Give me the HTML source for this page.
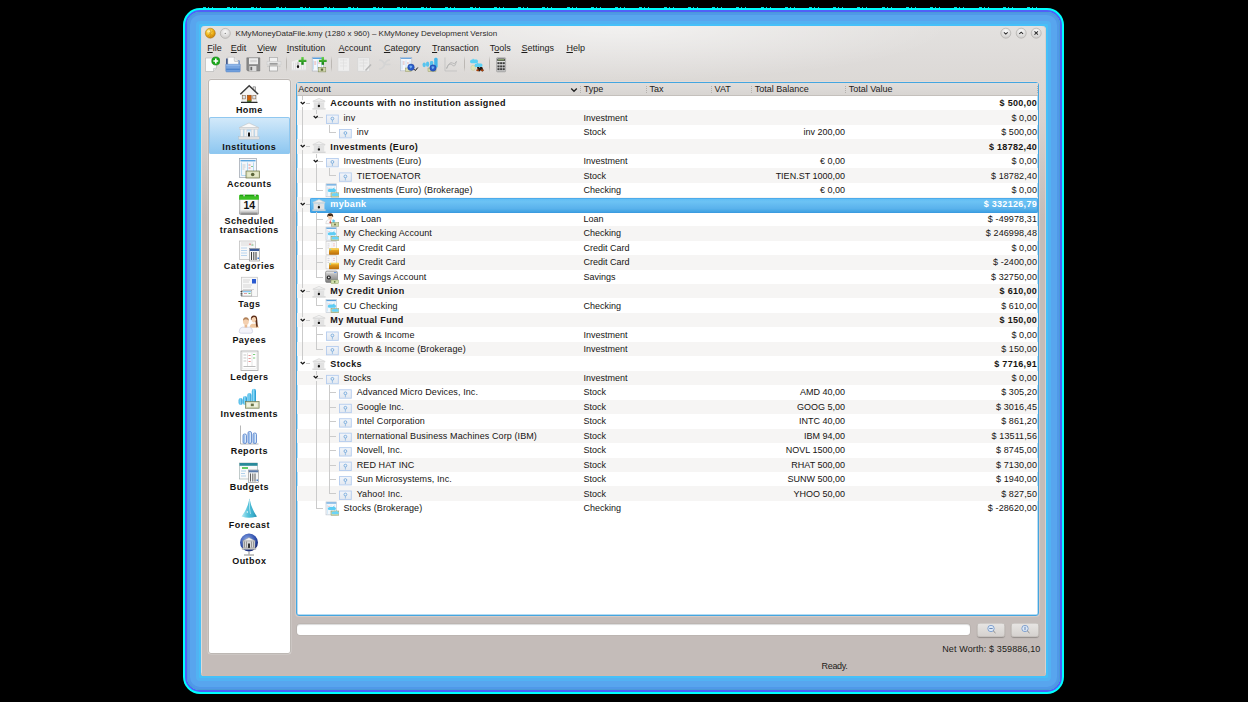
<!DOCTYPE html><html><head><meta charset="utf-8"><style>
html,body{margin:0;padding:0}
body{width:1248px;height:702px;background:#000;position:relative;overflow:hidden;font-family:"Liberation Sans", sans-serif}
.t{position:absolute;white-space:nowrap;line-height:12px}
.b{position:absolute;box-sizing:border-box}
</style></head><body>
<div class="b" style="left:183px;top:7.6px;width:881px;height:686.4px;border-radius:17px;background:#00ffff"></div>
<div class="b" style="left:185px;top:10px;width:877px;height:682px;border-radius:15px;background:#5060f8"></div>
<div class="b" style="left:187px;top:11.6px;width:873px;height:678.6px;border-radius:13px;background:#46c0f8;box-shadow:inset 0 0 0 1px #4a9ad8, inset 0 0 0 3px #5098e8, inset 0 0 0 9px #58a5ee, inset 0 0 0 12px #52b2f2"></div>
<div class="b" style="left:203px;top:7px;width:843px;height:1px;background:repeating-linear-gradient(to right,#00ffff 0 3px,transparent 3px 5px,#00ffff 5px 6px,transparent 6px 9px,#00ffff 9px 10px,transparent 10px 24.24px);opacity:0.85"></div>
<div class="b" style="left:201px;top:26px;width:845px;height:650px;border-radius:4px 4px 3px 3px;background:linear-gradient(to bottom,#e3e1df 0px,#dedbd9 36px,#dcd9d6 54px,#d8d3d0 94px,#cdc7c4 144px,#c4bcb9 192px,#c4bcb9 650px);box-shadow:inset 0 -1.5px 0 #cdbab2, inset 1px 0 0 #dcdad8, inset -1px 0 0 #d8d2ce"></div>
<div class="b" style="left:201px;top:26px;width:845px;height:60px;border-radius:4px 4px 0 0;background:radial-gradient(ellipse 330px 55px at 420px 0px,rgba(255,255,255,0.55),rgba(255,255,255,0) 100%)"></div>
<svg class="b" style="left:204px;top:27px" width="13" height="13" viewBox="0 0 13 13"><defs><radialGradient id="og" cx="0.4" cy="0.35" r="0.7"><stop offset="0" stop-color="#fff080"/><stop offset="0.55" stop-color="#f0b418"/><stop offset="1" stop-color="#c07808"/></radialGradient></defs><circle cx="6.3" cy="6.2" r="5" fill="url(#og)" stroke="#a87018" stroke-width="0.5"/><path d="M6.3 2.5 L6.3 10 M4 4 L8.5 9 M8.5 4 L4 9" stroke="#c07810" stroke-width="0.8" opacity="0.6"/><ellipse cx="4.6" cy="4.4" rx="1.5" ry="1.1" fill="#fff6c0" opacity="0.8"/></svg>
<svg class="b" style="left:219px;top:27px" width="13" height="13" viewBox="0 0 13 13"><defs><radialGradient id="gb" cx="0.5" cy="0.35" r="0.7"><stop offset="0" stop-color="#fafafa"/><stop offset="1" stop-color="#c8c6c4"/></radialGradient></defs><circle cx="6.3" cy="6.4" r="5" fill="url(#gb)" stroke="#a8a6a4" stroke-width="0.6"/><circle cx="6.3" cy="6.4" r="0.7" fill="#888"/></svg>
<div class="t" style="left:235.60px;top:28.32px;font-size:8.03px;font-weight:normal;color:#2c2a28;">KMyMoneyDataFile.kmy (1280 x 960) – KMyMoney Development Version</div>
<svg class="b" style="left:998px;top:26px" width="14" height="14" viewBox="0 0 14 14"><defs><radialGradient id="wb" cx="0.5" cy="0.3" r="0.75"><stop offset="0" stop-color="#fbfbfb"/><stop offset="1" stop-color="#cac8c6"/></radialGradient></defs><circle cx="7.8" cy="7.2" r="5" fill="url(#wb)" stroke="#a9a7a5" stroke-width="0.6"/><g transform="translate(7.8,7)"><path d="M-2.2 -0.8 L0 1.2 L2.2 -0.8" stroke="#2a2a2a" stroke-width="1.2" fill="none" transform="scale(0.85)"/></g></svg>
<svg class="b" style="left:1014px;top:26px" width="14" height="14" viewBox="0 0 14 14"><defs><radialGradient id="wb" cx="0.5" cy="0.3" r="0.75"><stop offset="0" stop-color="#fbfbfb"/><stop offset="1" stop-color="#cac8c6"/></radialGradient></defs><circle cx="7.2" cy="7.2" r="5" fill="url(#wb)" stroke="#a9a7a5" stroke-width="0.6"/><g transform="translate(7.2,7)"><path d="M-2.2 1 L0 -1 L2.2 1" stroke="#2a2a2a" stroke-width="1.2" fill="none" transform="scale(0.85)"/></g></svg>
<svg class="b" style="left:1029px;top:26px" width="14" height="14" viewBox="0 0 14 14"><defs><radialGradient id="wb" cx="0.5" cy="0.3" r="0.75"><stop offset="0" stop-color="#fbfbfb"/><stop offset="1" stop-color="#cac8c6"/></radialGradient></defs><circle cx="7.2" cy="7.2" r="5" fill="url(#wb)" stroke="#a9a7a5" stroke-width="0.6"/><g transform="translate(7.2,7)"><path d="M-2 -2 L2 2 M2 -2 L-2 2" stroke="#2a2a2a" stroke-width="1.2" fill="none" transform="scale(0.85)"/></g></svg>
<div class="t" style="left:207.20px;top:42.18px;font-size:9px;font-weight:normal;color:#1e1c1a;"><u>F</u>ile</div>
<div class="t" style="left:230.80px;top:42.18px;font-size:9px;font-weight:normal;color:#1e1c1a;"><u>E</u>dit</div>
<div class="t" style="left:257.20px;top:42.18px;font-size:9px;font-weight:normal;color:#1e1c1a;"><u>V</u>iew</div>
<div class="t" style="left:286.80px;top:42.18px;font-size:9px;font-weight:normal;color:#1e1c1a;"><u>I</u>nstitution</div>
<div class="t" style="left:338.60px;top:42.18px;font-size:9px;font-weight:normal;color:#1e1c1a;"><u>A</u>ccount</div>
<div class="t" style="left:383.90px;top:42.18px;font-size:9px;font-weight:normal;color:#1e1c1a;"><u>C</u>ategory</div>
<div class="t" style="left:432.00px;top:42.18px;font-size:9px;font-weight:normal;color:#1e1c1a;"><u>T</u>ransaction</div>
<div class="t" style="left:489.70px;top:42.18px;font-size:9px;font-weight:normal;color:#1e1c1a;">T<u>o</u>ols</div>
<div class="t" style="left:521.40px;top:42.18px;font-size:9px;font-weight:normal;color:#1e1c1a;"><u>S</u>ettings</div>
<div class="t" style="left:566.40px;top:42.18px;font-size:9px;font-weight:normal;color:#1e1c1a;"><u>H</u>elp</div>
<div class="b" style="left:208px;top:79px;width:83px;height:575px;border-radius:3px;background:#fff;box-shadow:inset 0 0 0 1px #bdb8b4, 0 0 0 0.5px rgba(255,255,255,0.3)"></div>
<div class="b" style="left:209px;top:117px;width:81px;height:37px;border-radius:2px;background:linear-gradient(to bottom,#d4eafa,#a8d4f4 60%,#8cc6f0);box-shadow:inset 0 0 0 1px #90c8f0"></div>
<div class="t" style="left:49.30px;width:400px;text-align:center;top:103.58px;font-size:9px;font-weight:bold;color:#121110;letter-spacing:0.45px;">Home</div>
<div class="t" style="left:49.30px;width:400px;text-align:center;top:140.68px;font-size:9px;font-weight:bold;color:#121110;letter-spacing:0.45px;">Institutions</div>
<div class="t" style="left:49.30px;width:400px;text-align:center;top:177.58px;font-size:9px;font-weight:bold;color:#121110;letter-spacing:0.45px;">Accounts</div>
<div class="t" style="left:49.30px;width:400px;text-align:center;top:215.08px;font-size:9px;font-weight:bold;color:#121110;letter-spacing:0.45px;">Scheduled</div>
<div class="t" style="left:49.30px;width:400px;text-align:center;top:223.98px;font-size:9px;font-weight:bold;color:#121110;letter-spacing:0.45px;">transactions</div>
<div class="t" style="left:49.30px;width:400px;text-align:center;top:260.18px;font-size:9px;font-weight:bold;color:#121110;letter-spacing:0.45px;">Categories</div>
<div class="t" style="left:49.30px;width:400px;text-align:center;top:297.68px;font-size:9px;font-weight:bold;color:#121110;letter-spacing:0.45px;">Tags</div>
<div class="t" style="left:49.30px;width:400px;text-align:center;top:334.18px;font-size:9px;font-weight:bold;color:#121110;letter-spacing:0.45px;">Payees</div>
<div class="t" style="left:49.30px;width:400px;text-align:center;top:370.98px;font-size:9px;font-weight:bold;color:#121110;letter-spacing:0.45px;">Ledgers</div>
<div class="t" style="left:49.30px;width:400px;text-align:center;top:407.98px;font-size:9px;font-weight:bold;color:#121110;letter-spacing:0.45px;">Investments</div>
<div class="t" style="left:49.30px;width:400px;text-align:center;top:444.58px;font-size:9px;font-weight:bold;color:#121110;letter-spacing:0.45px;">Reports</div>
<div class="t" style="left:49.30px;width:400px;text-align:center;top:481.48px;font-size:9px;font-weight:bold;color:#121110;letter-spacing:0.45px;">Budgets</div>
<div class="t" style="left:49.30px;width:400px;text-align:center;top:518.68px;font-size:9px;font-weight:bold;color:#121110;letter-spacing:0.45px;">Forecast</div>
<div class="t" style="left:49.30px;width:400px;text-align:center;top:555.08px;font-size:9px;font-weight:bold;color:#121110;letter-spacing:0.45px;">Outbox</div>
<div class="b" style="left:296px;top:82px;width:743px;height:534px;border-radius:3px;background:#fff;border:1px solid #44a6e0;box-shadow:inset 0 0 0 0.7px rgba(72,168,224,0.55), 0 0 1px 1px rgba(240,222,216,0.5)"></div>
<div class="b" style="left:297px;top:83px;width:741px;height:13px;background:linear-gradient(to bottom,#e0dddb,#d8d5d2);border-bottom:1px solid #c4c0bc"></div>
<div class="t" style="left:298.30px;top:82.88px;font-size:9px;font-weight:normal;color:#1e1c1a;">Account</div>
<svg class="b" style="left:570px;top:87px" width="8" height="6" viewBox="0 0 8 6"><path d="M1.2 1.5 L4 4.3 L6.8 1.5" stroke="#222" stroke-width="1.3" fill="none"/></svg>
<div class="b" style="left:580px;top:86px;width:1px;height:7px;background:repeating-linear-gradient(to bottom,#b4b0ac 0 1px,transparent 1px 2px)"></div>
<div class="b" style="left:646px;top:86px;width:1px;height:7px;background:repeating-linear-gradient(to bottom,#b4b0ac 0 1px,transparent 1px 2px)"></div>
<div class="b" style="left:711px;top:86px;width:1px;height:7px;background:repeating-linear-gradient(to bottom,#b4b0ac 0 1px,transparent 1px 2px)"></div>
<div class="b" style="left:751px;top:86px;width:1px;height:7px;background:repeating-linear-gradient(to bottom,#b4b0ac 0 1px,transparent 1px 2px)"></div>
<div class="b" style="left:845px;top:86px;width:1px;height:7px;background:repeating-linear-gradient(to bottom,#b4b0ac 0 1px,transparent 1px 2px)"></div>
<div class="b" style="left:1037px;top:86px;width:1px;height:7px;background:repeating-linear-gradient(to bottom,#b4b0ac 0 1px,transparent 1px 2px)"></div>
<div class="t" style="left:583.70px;top:82.88px;font-size:9px;font-weight:normal;color:#1e1c1a;">Type</div>
<div class="t" style="left:649.40px;top:82.88px;font-size:9px;font-weight:normal;color:#1e1c1a;">Tax</div>
<div class="t" style="left:714.60px;top:82.88px;font-size:9px;font-weight:normal;color:#1e1c1a;">VAT</div>
<div class="t" style="left:754.70px;top:82.88px;font-size:9px;font-weight:normal;color:#1e1c1a;">Total Balance</div>
<div class="t" style="left:848.70px;top:82.88px;font-size:9px;font-weight:normal;color:#1e1c1a;">Total Value</div>
<div class="b" style="left:297px;top:110.46px;width:741px;height:14.46px;background:#f6f5f4"></div>
<div class="b" style="left:297px;top:139.38px;width:741px;height:14.46px;background:#f6f5f4"></div>
<div class="b" style="left:297px;top:168.30px;width:741px;height:14.46px;background:#f6f5f4"></div>
<div class="b" style="left:297px;top:197.22px;width:741px;height:14.46px;background:#f6f5f4"></div>
<div class="b" style="left:297px;top:226.14px;width:741px;height:14.46px;background:#f6f5f4"></div>
<div class="b" style="left:297px;top:255.06px;width:741px;height:14.46px;background:#f6f5f4"></div>
<div class="b" style="left:297px;top:283.98px;width:741px;height:14.46px;background:#f6f5f4"></div>
<div class="b" style="left:297px;top:312.90px;width:741px;height:14.46px;background:#f6f5f4"></div>
<div class="b" style="left:297px;top:341.82px;width:741px;height:14.46px;background:#f6f5f4"></div>
<div class="b" style="left:297px;top:370.74px;width:741px;height:14.46px;background:#f6f5f4"></div>
<div class="b" style="left:297px;top:399.66px;width:741px;height:14.46px;background:#f6f5f4"></div>
<div class="b" style="left:297px;top:428.58px;width:741px;height:14.46px;background:#f6f5f4"></div>
<div class="b" style="left:297px;top:457.50px;width:741px;height:14.46px;background:#f6f5f4"></div>
<div class="b" style="left:297px;top:486.42px;width:741px;height:14.46px;background:#f6f5f4"></div>
<div class="b" style="left:310px;top:197.72px;width:728px;height:14.8px;border-radius:2px;background:linear-gradient(to bottom,#5ebef6,#6cc2f4 25%,#5ab2ec 70%,#3a9ee0);box-shadow:inset 0 0 0 0.6px #3a98e0"></div>
<div class="b" style="left:302px;top:96.00px;width:1px;height:4.00px;background:#cbcbcb"></div>
<div class="b" style="left:302px;top:106.50px;width:1px;height:36.88px;background:#cbcbcb"></div>
<div class="b" style="left:302px;top:149.88px;width:1px;height:51.34px;background:#cbcbcb"></div>
<div class="b" style="left:302px;top:207.72px;width:1px;height:80.26px;background:#cbcbcb"></div>
<div class="b" style="left:302px;top:294.48px;width:1px;height:22.42px;background:#cbcbcb"></div>
<div class="b" style="left:302px;top:323.40px;width:1px;height:36.88px;background:#cbcbcb"></div>
<div class="b" style="left:316px;top:110.46px;width:1px;height:4.00px;background:#cbcbcb"></div>
<div class="b" style="left:316px;top:153.84px;width:1px;height:4.00px;background:#cbcbcb"></div>
<div class="b" style="left:316px;top:164.34px;width:1px;height:25.42px;background:#cbcbcb"></div>
<div class="b" style="left:316px;top:211.68px;width:1px;height:64.84px;background:#cbcbcb"></div>
<div class="b" style="left:316px;top:298.44px;width:1px;height:7.00px;background:#cbcbcb"></div>
<div class="b" style="left:316px;top:327.36px;width:1px;height:21.46px;background:#cbcbcb"></div>
<div class="b" style="left:316px;top:370.74px;width:1px;height:4.00px;background:#cbcbcb"></div>
<div class="b" style="left:316px;top:381.24px;width:1px;height:126.64px;background:#cbcbcb"></div>
<div class="b" style="left:329px;top:124.92px;width:1px;height:7.00px;background:#cbcbcb"></div>
<div class="b" style="left:329px;top:168.30px;width:1px;height:7.00px;background:#cbcbcb"></div>
<div class="b" style="left:329px;top:385.20px;width:1px;height:108.22px;background:#cbcbcb"></div>
<div class="b" style="left:306px;top:103.00px;width:4px;height:1px;background:#cbcbcb"></div>
<div class="b" style="left:316px;top:117.46px;width:7px;height:1px;background:#cbcbcb"></div>
<div class="b" style="left:329px;top:131.92px;width:7px;height:1px;background:#cbcbcb"></div>
<div class="b" style="left:306px;top:146.38px;width:4px;height:1px;background:#cbcbcb"></div>
<div class="b" style="left:316px;top:160.84px;width:7px;height:1px;background:#cbcbcb"></div>
<div class="b" style="left:329px;top:175.30px;width:7px;height:1px;background:#cbcbcb"></div>
<div class="b" style="left:316px;top:189.76px;width:7px;height:1px;background:#cbcbcb"></div>
<div class="b" style="left:306px;top:204.22px;width:4px;height:1px;background:#cbcbcb"></div>
<div class="b" style="left:316px;top:218.68px;width:7px;height:1px;background:#cbcbcb"></div>
<div class="b" style="left:316px;top:233.14px;width:7px;height:1px;background:#cbcbcb"></div>
<div class="b" style="left:316px;top:247.60px;width:7px;height:1px;background:#cbcbcb"></div>
<div class="b" style="left:316px;top:262.06px;width:7px;height:1px;background:#cbcbcb"></div>
<div class="b" style="left:316px;top:276.52px;width:7px;height:1px;background:#cbcbcb"></div>
<div class="b" style="left:306px;top:290.98px;width:4px;height:1px;background:#cbcbcb"></div>
<div class="b" style="left:316px;top:305.44px;width:7px;height:1px;background:#cbcbcb"></div>
<div class="b" style="left:306px;top:319.90px;width:4px;height:1px;background:#cbcbcb"></div>
<div class="b" style="left:316px;top:334.36px;width:7px;height:1px;background:#cbcbcb"></div>
<div class="b" style="left:316px;top:348.82px;width:7px;height:1px;background:#cbcbcb"></div>
<div class="b" style="left:306px;top:363.28px;width:4px;height:1px;background:#cbcbcb"></div>
<div class="b" style="left:316px;top:377.74px;width:7px;height:1px;background:#cbcbcb"></div>
<div class="b" style="left:329px;top:392.20px;width:7px;height:1px;background:#cbcbcb"></div>
<div class="b" style="left:329px;top:406.66px;width:7px;height:1px;background:#cbcbcb"></div>
<div class="b" style="left:329px;top:421.12px;width:7px;height:1px;background:#cbcbcb"></div>
<div class="b" style="left:329px;top:435.58px;width:7px;height:1px;background:#cbcbcb"></div>
<div class="b" style="left:329px;top:450.04px;width:7px;height:1px;background:#cbcbcb"></div>
<div class="b" style="left:329px;top:464.50px;width:7px;height:1px;background:#cbcbcb"></div>
<div class="b" style="left:329px;top:478.96px;width:7px;height:1px;background:#cbcbcb"></div>
<div class="b" style="left:329px;top:493.42px;width:7px;height:1px;background:#cbcbcb"></div>
<div class="b" style="left:316px;top:507.88px;width:7px;height:1px;background:#cbcbcb"></div>
<svg class="b" style="left:300px;top:101px" width="6" height="4" viewBox="0 0 6 4"><path d="M0.7 0.9 L2.7 2.9 L4.7 0.9" stroke="#1a1a1a" stroke-width="1.35" fill="none"/></svg>
<svg class="b" style="left:312px;top:96px" width="14" height="16" viewBox="0 0 14 16"><g transform="translate(0,2.00)"><path d="M0.8 3.2 L7 0.4 L13.2 3.2 Z" fill="#f2f2f2" stroke="#cfcfcf" stroke-width="0.6"/><rect x="1.2" y="3.2" width="11.6" height="1.2" fill="#dcdcdc"/><rect x="1.6" y="4.4" width="10.8" height="6" fill="#ececec"/><path d="M3 4.6 v5.6 M5 4.6 v5.6 M9 4.6 v5.6 M11 4.6 v5.6" stroke="#d4d4d4" stroke-width="0.8"/><path d="M6 4.6 L8 4.6 L7.8 6.8 L6.2 6.8 Z" fill="#c8c8c8"/><rect x="5.8" y="6.8" width="2.2" height="2.4" rx="0.9" fill="#111"/><rect x="0.4" y="10.2" width="13.2" height="1.4" fill="#d6d6d6"/></g></svg>
<div class="t" style="left:330.30px;top:97.23px;font-size:9px;font-weight:bold;color:#161412;letter-spacing:0.35px;">Accounts with no institution assigned</div>
<div class="t" style="left:637.00px;width:400px;text-align:right;top:97.23px;font-size:9px;font-weight:bold;color:#161412;letter-spacing:0.3px;">$ 500,00</div>
<svg class="b" style="left:313px;top:115px" width="6" height="4" viewBox="0 0 6 4"><path d="M0.7 0.9 L2.7 2.9 L4.7 0.9" stroke="#1a1a1a" stroke-width="1.35" fill="none"/></svg>
<svg class="b" style="left:325px;top:110px" width="14" height="16" viewBox="0 0 14 16"><g transform="translate(0,1.96)"><defs><linearGradient id="ig" x1="0" y1="0" x2="0" y2="1"><stop offset="0" stop-color="#f2f5fa"/><stop offset="1" stop-color="#e2e8f0"/></linearGradient></defs><rect x="1.5" y="3.1" width="11.8" height="8.4" fill="url(#ig)" stroke="#b4ccee" stroke-width="0.9"/><circle cx="7.4" cy="6.6" r="1.4" fill="none" stroke="#6aa2d8" stroke-width="0.8"/><path d="M7.4 8 L7.4 10.6" stroke="#7aaee0" stroke-width="0.7"/></g></svg>
<div class="t" style="left:343.50px;top:111.69px;font-size:9px;font-weight:normal;color:#161412;letter-spacing:0.1px;">inv</div>
<div class="t" style="left:583.50px;top:111.69px;font-size:9px;font-weight:normal;color:#161412;">Investment</div>
<div class="t" style="left:637.00px;width:400px;text-align:right;top:111.69px;font-size:9px;font-weight:normal;color:#161412;letter-spacing:0.1px;">$ 0,00</div>
<svg class="b" style="left:338px;top:124px" width="14" height="16" viewBox="0 0 14 16"><g transform="translate(0,2.42)"><defs><linearGradient id="ig" x1="0" y1="0" x2="0" y2="1"><stop offset="0" stop-color="#f2f5fa"/><stop offset="1" stop-color="#e2e8f0"/></linearGradient></defs><rect x="1.5" y="3.1" width="11.8" height="8.4" fill="url(#ig)" stroke="#b4ccee" stroke-width="0.9"/><circle cx="7.4" cy="6.6" r="1.4" fill="none" stroke="#6aa2d8" stroke-width="0.8"/><path d="M7.4 8 L7.4 10.6" stroke="#7aaee0" stroke-width="0.7"/></g></svg>
<div class="t" style="left:356.70px;top:126.15px;font-size:9px;font-weight:normal;color:#161412;letter-spacing:0.1px;">inv</div>
<div class="t" style="left:583.50px;top:126.15px;font-size:9px;font-weight:normal;color:#161412;">Stock</div>
<div class="t" style="left:445.00px;width:400px;text-align:right;top:126.15px;font-size:9px;font-weight:normal;color:#161412;">inv 200,00</div>
<div class="t" style="left:637.00px;width:400px;text-align:right;top:126.15px;font-size:9px;font-weight:normal;color:#161412;letter-spacing:0.1px;">$ 500,00</div>
<svg class="b" style="left:300px;top:144px" width="6" height="4" viewBox="0 0 6 4"><path d="M0.7 0.9 L2.7 2.9 L4.7 0.9" stroke="#1a1a1a" stroke-width="1.35" fill="none"/></svg>
<svg class="b" style="left:312px;top:139px" width="14" height="16" viewBox="0 0 14 16"><g transform="translate(0,2.38)"><path d="M0.8 3.2 L7 0.4 L13.2 3.2 Z" fill="#f2f2f2" stroke="#cfcfcf" stroke-width="0.6"/><rect x="1.2" y="3.2" width="11.6" height="1.2" fill="#dcdcdc"/><rect x="1.6" y="4.4" width="10.8" height="6" fill="#ececec"/><path d="M3 4.6 v5.6 M5 4.6 v5.6 M9 4.6 v5.6 M11 4.6 v5.6" stroke="#d4d4d4" stroke-width="0.8"/><path d="M6 4.6 L8 4.6 L7.8 6.8 L6.2 6.8 Z" fill="#c8c8c8"/><rect x="5.8" y="6.8" width="2.2" height="2.4" rx="0.9" fill="#111"/><rect x="0.4" y="10.2" width="13.2" height="1.4" fill="#d6d6d6"/></g></svg>
<div class="t" style="left:330.30px;top:140.61px;font-size:9px;font-weight:bold;color:#161412;letter-spacing:0.35px;">Investments (Euro)</div>
<div class="t" style="left:637.00px;width:400px;text-align:right;top:140.61px;font-size:9px;font-weight:bold;color:#161412;letter-spacing:0.3px;">$ 18782,40</div>
<svg class="b" style="left:313px;top:159px" width="6" height="4" viewBox="0 0 6 4"><path d="M0.7 0.9 L2.7 2.9 L4.7 0.9" stroke="#1a1a1a" stroke-width="1.35" fill="none"/></svg>
<svg class="b" style="left:325px;top:153px" width="14" height="16" viewBox="0 0 14 16"><g transform="translate(0,2.34)"><defs><linearGradient id="ig" x1="0" y1="0" x2="0" y2="1"><stop offset="0" stop-color="#f2f5fa"/><stop offset="1" stop-color="#e2e8f0"/></linearGradient></defs><rect x="1.5" y="3.1" width="11.8" height="8.4" fill="url(#ig)" stroke="#b4ccee" stroke-width="0.9"/><circle cx="7.4" cy="6.6" r="1.4" fill="none" stroke="#6aa2d8" stroke-width="0.8"/><path d="M7.4 8 L7.4 10.6" stroke="#7aaee0" stroke-width="0.7"/></g></svg>
<div class="t" style="left:343.50px;top:155.07px;font-size:9px;font-weight:normal;color:#161412;letter-spacing:0.1px;">Investments (Euro)</div>
<div class="t" style="left:583.50px;top:155.07px;font-size:9px;font-weight:normal;color:#161412;">Investment</div>
<div class="t" style="left:445.00px;width:400px;text-align:right;top:155.07px;font-size:9px;font-weight:normal;color:#161412;">€ 0,00</div>
<div class="t" style="left:637.00px;width:400px;text-align:right;top:155.07px;font-size:9px;font-weight:normal;color:#161412;letter-spacing:0.1px;">$ 0,00</div>
<svg class="b" style="left:338px;top:168px" width="14" height="16" viewBox="0 0 14 16"><g transform="translate(0,1.80)"><defs><linearGradient id="ig" x1="0" y1="0" x2="0" y2="1"><stop offset="0" stop-color="#f2f5fa"/><stop offset="1" stop-color="#e2e8f0"/></linearGradient></defs><rect x="1.5" y="3.1" width="11.8" height="8.4" fill="url(#ig)" stroke="#b4ccee" stroke-width="0.9"/><circle cx="7.4" cy="6.6" r="1.4" fill="none" stroke="#6aa2d8" stroke-width="0.8"/><path d="M7.4 8 L7.4 10.6" stroke="#7aaee0" stroke-width="0.7"/></g></svg>
<div class="t" style="left:356.70px;top:169.53px;font-size:9px;font-weight:normal;color:#161412;letter-spacing:0.1px;">TIETOENATOR</div>
<div class="t" style="left:583.50px;top:169.53px;font-size:9px;font-weight:normal;color:#161412;">Stock</div>
<div class="t" style="left:445.00px;width:400px;text-align:right;top:169.53px;font-size:9px;font-weight:normal;color:#161412;">TIEN.ST 1000,00</div>
<div class="t" style="left:637.00px;width:400px;text-align:right;top:169.53px;font-size:9px;font-weight:normal;color:#161412;letter-spacing:0.1px;">$ 18782,40</div>
<svg class="b" style="left:325px;top:182px" width="14" height="16" viewBox="0 0 14 16"><g transform="translate(0,1.26)"><rect x="1" y="0.5" width="10.5" height="13" fill="#f2f8fc" stroke="#b8c0cc" stroke-width="0.6"/><rect x="1.4" y="1" width="9.7" height="1.2" fill="#5aa0dc"/><path d="M2.5 3.5 v9 M6 3.5 v9 M9.5 3.5 v9" stroke="#b8dcf4" stroke-width="0.5"/><path d="M3 5 h2 M7 6 h2" stroke="#e8a0a0" stroke-width="0.5"/><path d="M2.8 7.2 q0 -1.6 2 -1.6 h3 l1 -1 l0.6 1 q1.6 0.2 1.6 1.6 q0 1.5 -1.6 1.5 h-5 q-1.6 0 -1.6 -1.5 z" fill="#5cccf4"/><rect x="6" y="9.6" width="8" height="4.2" fill="#d0d8a8" stroke="#7a8450" stroke-width="0.4"/><path d="M6.5 11.5 q0 -1.5 1.8 -1.5 h2.5 l0.8 -0.8 l0.5 0.8 q1.8 0.2 1.8 1.5 q0 1.3 -1.6 1.3 h-4.2 q-1.6 0 -1.6 -1.3 z" fill="#6ad4f8"/></g></svg>
<div class="t" style="left:343.50px;top:183.99px;font-size:9px;font-weight:normal;color:#161412;letter-spacing:0.1px;">Investments (Euro) (Brokerage)</div>
<div class="t" style="left:583.50px;top:183.99px;font-size:9px;font-weight:normal;color:#161412;">Checking</div>
<div class="t" style="left:445.00px;width:400px;text-align:right;top:183.99px;font-size:9px;font-weight:normal;color:#161412;">€ 0,00</div>
<div class="t" style="left:637.00px;width:400px;text-align:right;top:183.99px;font-size:9px;font-weight:normal;color:#161412;letter-spacing:0.1px;">$ 0,00</div>
<svg class="b" style="left:300px;top:202px" width="6" height="4" viewBox="0 0 6 4"><path d="M0.7 0.9 L2.7 2.9 L4.7 0.9" stroke="#1a1a1a" stroke-width="1.35" fill="none"/></svg>
<svg class="b" style="left:312px;top:197px" width="14" height="16" viewBox="0 0 14 16"><g transform="translate(0,2.22)"><path d="M0.8 3.2 L7 0.4 L13.2 3.2 Z" fill="#f2f2f2" stroke="#cfcfcf" stroke-width="0.6"/><rect x="1.2" y="3.2" width="11.6" height="1.2" fill="#dcdcdc"/><rect x="1.6" y="4.4" width="10.8" height="6" fill="#ececec"/><path d="M3 4.6 v5.6 M5 4.6 v5.6 M9 4.6 v5.6 M11 4.6 v5.6" stroke="#d4d4d4" stroke-width="0.8"/><path d="M6 4.6 L8 4.6 L7.8 6.8 L6.2 6.8 Z" fill="#c8c8c8"/><rect x="5.8" y="6.8" width="2.2" height="2.4" rx="0.9" fill="#111"/><rect x="0.4" y="10.2" width="13.2" height="1.4" fill="#d6d6d6"/></g></svg>
<div class="t" style="left:330.30px;top:198.45px;font-size:9px;font-weight:bold;color:#ffffff;letter-spacing:0.35px;">mybank</div>
<div class="t" style="left:637.00px;width:400px;text-align:right;top:198.45px;font-size:9px;font-weight:bold;color:#ffffff;letter-spacing:0.3px;">$ 332126,79</div>
<svg class="b" style="left:325px;top:211px" width="14" height="16" viewBox="0 0 14 16"><g transform="translate(0,1.68)"><path d="M2.2 4 q0 -3.4 3 -3.4 q3 0 3 3.4 z" fill="#3a2414"/><ellipse cx="5.2" cy="4.4" rx="2.2" ry="2.4" fill="#f4cca8"/><path d="M3 3.2 q2.2 -2.4 4.4 0 z" fill="#3a2414"/><path d="M0.8 11 q0 -3.6 2.6 -4 h3.6 q2.6 0.4 2.6 4 z" fill="#fcfcfc" stroke="#c0c0c0" stroke-width="0.5"/><path d="M5.2 7 l-0.7 3 l0.7 1 l0.7 -1 z" fill="#d02020"/><path d="M6.6 8.5 l2 -2 l2 2 h-1 v2.5 h-2 v-2.5 z" fill="#5ccaf2"/><rect x="6.2" y="9.8" width="7.6" height="3.8" fill="#d0d8a8" stroke="#7a8450" stroke-width="0.4"/><circle cx="10" cy="11.7" r="1" fill="#6a7448"/></g></svg>
<div class="t" style="left:343.50px;top:212.91px;font-size:9px;font-weight:normal;color:#161412;letter-spacing:0.1px;">Car Loan</div>
<div class="t" style="left:583.50px;top:212.91px;font-size:9px;font-weight:normal;color:#161412;">Loan</div>
<div class="t" style="left:637.00px;width:400px;text-align:right;top:212.91px;font-size:9px;font-weight:normal;color:#161412;letter-spacing:0.1px;">$ -49978,31</div>
<svg class="b" style="left:325px;top:226px" width="14" height="16" viewBox="0 0 14 16"><g transform="translate(0,0.64)"><rect x="1" y="0.5" width="10.5" height="13" fill="#f2f8fc" stroke="#b8c0cc" stroke-width="0.6"/><rect x="1.4" y="1" width="9.7" height="1.2" fill="#5aa0dc"/><path d="M2.5 3.5 v9 M6 3.5 v9 M9.5 3.5 v9" stroke="#b8dcf4" stroke-width="0.5"/><path d="M3 5 h2 M7 6 h2" stroke="#e8a0a0" stroke-width="0.5"/><path d="M2.8 7.2 q0 -1.6 2 -1.6 h3 l1 -1 l0.6 1 q1.6 0.2 1.6 1.6 q0 1.5 -1.6 1.5 h-5 q-1.6 0 -1.6 -1.5 z" fill="#5cccf4"/><rect x="6" y="9.6" width="8" height="4.2" fill="#d0d8a8" stroke="#7a8450" stroke-width="0.4"/><path d="M6.5 11.5 q0 -1.5 1.8 -1.5 h2.5 l0.8 -0.8 l0.5 0.8 q1.8 0.2 1.8 1.5 q0 1.3 -1.6 1.3 h-4.2 q-1.6 0 -1.6 -1.3 z" fill="#6ad4f8"/></g></svg>
<div class="t" style="left:343.50px;top:227.37px;font-size:9px;font-weight:normal;color:#161412;letter-spacing:0.1px;">My Checking Account</div>
<div class="t" style="left:583.50px;top:227.37px;font-size:9px;font-weight:normal;color:#161412;">Checking</div>
<div class="t" style="left:637.00px;width:400px;text-align:right;top:227.37px;font-size:9px;font-weight:normal;color:#161412;letter-spacing:0.1px;">$ 246998,48</div>
<svg class="b" style="left:325px;top:240px" width="14" height="16" viewBox="0 0 14 16"><g transform="translate(0,0.90)"><defs><linearGradient id="ccg" x1="0" y1="0" x2="0" y2="1"><stop offset="0" stop-color="#f4c030"/><stop offset="0.5" stop-color="#d89018"/><stop offset="1" stop-color="#b86a08"/></linearGradient></defs><rect x="1" y="0.5" width="10.5" height="13" fill="#fafafa" stroke="#c8c8c8" stroke-width="0.6"/><path d="M2.5 3 h2 M2.5 5 h2 M2.5 7 h1.5" stroke="#b8b8c8" stroke-width="0.6"/><path d="M8 3 h2 M8 5 h2" stroke="#e8a0a0" stroke-width="0.6"/><path d="M7 1 v12" stroke="#e0e0f0" stroke-width="0.5"/><rect x="4" y="7.4" width="10" height="6.4" rx="0.6" fill="url(#ccg)"/><rect x="4.5" y="7.8" width="9" height="1" fill="#f8d860"/><rect x="4.6" y="8" width="1.2" height="1.4" fill="#70d0f0"/></g></svg>
<div class="t" style="left:343.50px;top:241.83px;font-size:9px;font-weight:normal;color:#161412;letter-spacing:0.1px;">My Credit Card</div>
<div class="t" style="left:583.50px;top:241.83px;font-size:9px;font-weight:normal;color:#161412;">Credit Card</div>
<div class="t" style="left:637.00px;width:400px;text-align:right;top:241.83px;font-size:9px;font-weight:normal;color:#161412;letter-spacing:0.1px;">$ 0,00</div>
<svg class="b" style="left:325px;top:255px" width="14" height="16" viewBox="0 0 14 16"><g transform="translate(0,0.36)"><defs><linearGradient id="ccg" x1="0" y1="0" x2="0" y2="1"><stop offset="0" stop-color="#f4c030"/><stop offset="0.5" stop-color="#d89018"/><stop offset="1" stop-color="#b86a08"/></linearGradient></defs><rect x="1" y="0.5" width="10.5" height="13" fill="#fafafa" stroke="#c8c8c8" stroke-width="0.6"/><path d="M2.5 3 h2 M2.5 5 h2 M2.5 7 h1.5" stroke="#b8b8c8" stroke-width="0.6"/><path d="M8 3 h2 M8 5 h2" stroke="#e8a0a0" stroke-width="0.6"/><path d="M7 1 v12" stroke="#e0e0f0" stroke-width="0.5"/><rect x="4" y="7.4" width="10" height="6.4" rx="0.6" fill="url(#ccg)"/><rect x="4.5" y="7.8" width="9" height="1" fill="#f8d860"/><rect x="4.6" y="8" width="1.2" height="1.4" fill="#70d0f0"/></g></svg>
<div class="t" style="left:343.50px;top:256.29px;font-size:9px;font-weight:normal;color:#161412;letter-spacing:0.1px;">My Credit Card</div>
<div class="t" style="left:583.50px;top:256.29px;font-size:9px;font-weight:normal;color:#161412;">Credit Card</div>
<div class="t" style="left:637.00px;width:400px;text-align:right;top:256.29px;font-size:9px;font-weight:normal;color:#161412;letter-spacing:0.1px;">$ -2400,00</div>
<svg class="b" style="left:325px;top:269px" width="14" height="16" viewBox="0 0 14 16"><g transform="translate(0,1.02)"><defs><linearGradient id="svg1" x1="0" y1="0" x2="0" y2="1"><stop offset="0" stop-color="#d8d8d8"/><stop offset="1" stop-color="#7a7a7a"/></linearGradient></defs><rect x="0.5" y="1" width="12" height="11.5" rx="1.6" fill="url(#svg1)" stroke="#6a6a6a" stroke-width="0.5"/><rect x="1.5" y="2" width="10" height="1.2" fill="#eaeaea" opacity="0.7"/><circle cx="3.8" cy="7.4" r="2" fill="#202020"/><circle cx="3.8" cy="7.4" r="0.9" fill="#e8e8e8"/><rect x="9" y="2" width="2.5" height="1" fill="#6a9ae0"/><rect x="6" y="10" width="7.5" height="3.6" fill="#d4e0b0" stroke="#7a9050" stroke-width="0.4"/><circle cx="9.7" cy="11.8" r="0.9" fill="#5a7a3a"/></g></svg>
<div class="t" style="left:343.50px;top:270.75px;font-size:9px;font-weight:normal;color:#161412;letter-spacing:0.1px;">My Savings Account</div>
<div class="t" style="left:583.50px;top:270.75px;font-size:9px;font-weight:normal;color:#161412;">Savings</div>
<div class="t" style="left:637.00px;width:400px;text-align:right;top:270.75px;font-size:9px;font-weight:normal;color:#161412;letter-spacing:0.1px;">$ 32750,00</div>
<svg class="b" style="left:300px;top:289px" width="6" height="4" viewBox="0 0 6 4"><path d="M0.7 0.9 L2.7 2.9 L4.7 0.9" stroke="#1a1a1a" stroke-width="1.35" fill="none"/></svg>
<svg class="b" style="left:312px;top:283px" width="14" height="16" viewBox="0 0 14 16"><g transform="translate(0,2.98)"><path d="M0.8 3.2 L7 0.4 L13.2 3.2 Z" fill="#f2f2f2" stroke="#cfcfcf" stroke-width="0.6"/><rect x="1.2" y="3.2" width="11.6" height="1.2" fill="#dcdcdc"/><rect x="1.6" y="4.4" width="10.8" height="6" fill="#ececec"/><path d="M3 4.6 v5.6 M5 4.6 v5.6 M9 4.6 v5.6 M11 4.6 v5.6" stroke="#d4d4d4" stroke-width="0.8"/><path d="M6 4.6 L8 4.6 L7.8 6.8 L6.2 6.8 Z" fill="#c8c8c8"/><rect x="5.8" y="6.8" width="2.2" height="2.4" rx="0.9" fill="#111"/><rect x="0.4" y="10.2" width="13.2" height="1.4" fill="#d6d6d6"/></g></svg>
<div class="t" style="left:330.30px;top:285.21px;font-size:9px;font-weight:bold;color:#161412;letter-spacing:0.35px;">My Credit Union</div>
<div class="t" style="left:637.00px;width:400px;text-align:right;top:285.21px;font-size:9px;font-weight:bold;color:#161412;letter-spacing:0.3px;">$ 610,00</div>
<svg class="b" style="left:325px;top:298px" width="14" height="16" viewBox="0 0 14 16"><g transform="translate(0,0.94)"><rect x="1" y="0.5" width="10.5" height="13" fill="#f2f8fc" stroke="#b8c0cc" stroke-width="0.6"/><rect x="1.4" y="1" width="9.7" height="1.2" fill="#5aa0dc"/><path d="M2.5 3.5 v9 M6 3.5 v9 M9.5 3.5 v9" stroke="#b8dcf4" stroke-width="0.5"/><path d="M3 5 h2 M7 6 h2" stroke="#e8a0a0" stroke-width="0.5"/><path d="M2.8 7.2 q0 -1.6 2 -1.6 h3 l1 -1 l0.6 1 q1.6 0.2 1.6 1.6 q0 1.5 -1.6 1.5 h-5 q-1.6 0 -1.6 -1.5 z" fill="#5cccf4"/><rect x="6" y="9.6" width="8" height="4.2" fill="#d0d8a8" stroke="#7a8450" stroke-width="0.4"/><path d="M6.5 11.5 q0 -1.5 1.8 -1.5 h2.5 l0.8 -0.8 l0.5 0.8 q1.8 0.2 1.8 1.5 q0 1.3 -1.6 1.3 h-4.2 q-1.6 0 -1.6 -1.3 z" fill="#6ad4f8"/></g></svg>
<div class="t" style="left:343.50px;top:299.67px;font-size:9px;font-weight:normal;color:#161412;letter-spacing:0.1px;">CU Checking</div>
<div class="t" style="left:583.50px;top:299.67px;font-size:9px;font-weight:normal;color:#161412;">Checking</div>
<div class="t" style="left:637.00px;width:400px;text-align:right;top:299.67px;font-size:9px;font-weight:normal;color:#161412;letter-spacing:0.1px;">$ 610,00</div>
<svg class="b" style="left:300px;top:318px" width="6" height="4" viewBox="0 0 6 4"><path d="M0.7 0.9 L2.7 2.9 L4.7 0.9" stroke="#1a1a1a" stroke-width="1.35" fill="none"/></svg>
<svg class="b" style="left:312px;top:312px" width="14" height="16" viewBox="0 0 14 16"><g transform="translate(0,2.90)"><path d="M0.8 3.2 L7 0.4 L13.2 3.2 Z" fill="#f2f2f2" stroke="#cfcfcf" stroke-width="0.6"/><rect x="1.2" y="3.2" width="11.6" height="1.2" fill="#dcdcdc"/><rect x="1.6" y="4.4" width="10.8" height="6" fill="#ececec"/><path d="M3 4.6 v5.6 M5 4.6 v5.6 M9 4.6 v5.6 M11 4.6 v5.6" stroke="#d4d4d4" stroke-width="0.8"/><path d="M6 4.6 L8 4.6 L7.8 6.8 L6.2 6.8 Z" fill="#c8c8c8"/><rect x="5.8" y="6.8" width="2.2" height="2.4" rx="0.9" fill="#111"/><rect x="0.4" y="10.2" width="13.2" height="1.4" fill="#d6d6d6"/></g></svg>
<div class="t" style="left:330.30px;top:314.13px;font-size:9px;font-weight:bold;color:#161412;letter-spacing:0.35px;">My Mutual Fund</div>
<div class="t" style="left:637.00px;width:400px;text-align:right;top:314.13px;font-size:9px;font-weight:bold;color:#161412;letter-spacing:0.3px;">$ 150,00</div>
<svg class="b" style="left:325px;top:327px" width="14" height="16" viewBox="0 0 14 16"><g transform="translate(0,1.86)"><defs><linearGradient id="ig" x1="0" y1="0" x2="0" y2="1"><stop offset="0" stop-color="#f2f5fa"/><stop offset="1" stop-color="#e2e8f0"/></linearGradient></defs><rect x="1.5" y="3.1" width="11.8" height="8.4" fill="url(#ig)" stroke="#b4ccee" stroke-width="0.9"/><circle cx="7.4" cy="6.6" r="1.4" fill="none" stroke="#6aa2d8" stroke-width="0.8"/><path d="M7.4 8 L7.4 10.6" stroke="#7aaee0" stroke-width="0.7"/></g></svg>
<div class="t" style="left:343.50px;top:328.59px;font-size:9px;font-weight:normal;color:#161412;letter-spacing:0.1px;">Growth &amp; Income</div>
<div class="t" style="left:583.50px;top:328.59px;font-size:9px;font-weight:normal;color:#161412;">Investment</div>
<div class="t" style="left:637.00px;width:400px;text-align:right;top:328.59px;font-size:9px;font-weight:normal;color:#161412;letter-spacing:0.1px;">$ 0,00</div>
<svg class="b" style="left:325px;top:341px" width="14" height="16" viewBox="0 0 14 16"><g transform="translate(0,2.32)"><defs><linearGradient id="ig" x1="0" y1="0" x2="0" y2="1"><stop offset="0" stop-color="#f2f5fa"/><stop offset="1" stop-color="#e2e8f0"/></linearGradient></defs><rect x="1.5" y="3.1" width="11.8" height="8.4" fill="url(#ig)" stroke="#b4ccee" stroke-width="0.9"/><circle cx="7.4" cy="6.6" r="1.4" fill="none" stroke="#6aa2d8" stroke-width="0.8"/><path d="M7.4 8 L7.4 10.6" stroke="#7aaee0" stroke-width="0.7"/></g></svg>
<div class="t" style="left:343.50px;top:343.05px;font-size:9px;font-weight:normal;color:#161412;letter-spacing:0.1px;">Growth &amp; Income (Brokerage)</div>
<div class="t" style="left:583.50px;top:343.05px;font-size:9px;font-weight:normal;color:#161412;">Investment</div>
<div class="t" style="left:637.00px;width:400px;text-align:right;top:343.05px;font-size:9px;font-weight:normal;color:#161412;letter-spacing:0.1px;">$ 150,00</div>
<svg class="b" style="left:300px;top:361px" width="6" height="4" viewBox="0 0 6 4"><path d="M0.7 0.9 L2.7 2.9 L4.7 0.9" stroke="#1a1a1a" stroke-width="1.35" fill="none"/></svg>
<svg class="b" style="left:312px;top:356px" width="14" height="16" viewBox="0 0 14 16"><g transform="translate(0,2.28)"><path d="M0.8 3.2 L7 0.4 L13.2 3.2 Z" fill="#f2f2f2" stroke="#cfcfcf" stroke-width="0.6"/><rect x="1.2" y="3.2" width="11.6" height="1.2" fill="#dcdcdc"/><rect x="1.6" y="4.4" width="10.8" height="6" fill="#ececec"/><path d="M3 4.6 v5.6 M5 4.6 v5.6 M9 4.6 v5.6 M11 4.6 v5.6" stroke="#d4d4d4" stroke-width="0.8"/><path d="M6 4.6 L8 4.6 L7.8 6.8 L6.2 6.8 Z" fill="#c8c8c8"/><rect x="5.8" y="6.8" width="2.2" height="2.4" rx="0.9" fill="#111"/><rect x="0.4" y="10.2" width="13.2" height="1.4" fill="#d6d6d6"/></g></svg>
<div class="t" style="left:330.30px;top:357.51px;font-size:9px;font-weight:bold;color:#161412;letter-spacing:0.35px;">Stocks</div>
<div class="t" style="left:637.00px;width:400px;text-align:right;top:357.51px;font-size:9px;font-weight:bold;color:#161412;letter-spacing:0.3px;">$ 7716,91</div>
<svg class="b" style="left:313px;top:375px" width="6" height="4" viewBox="0 0 6 4"><path d="M0.7 0.9 L2.7 2.9 L4.7 0.9" stroke="#1a1a1a" stroke-width="1.35" fill="none"/></svg>
<svg class="b" style="left:325px;top:370px" width="14" height="16" viewBox="0 0 14 16"><g transform="translate(0,2.24)"><defs><linearGradient id="ig" x1="0" y1="0" x2="0" y2="1"><stop offset="0" stop-color="#f2f5fa"/><stop offset="1" stop-color="#e2e8f0"/></linearGradient></defs><rect x="1.5" y="3.1" width="11.8" height="8.4" fill="url(#ig)" stroke="#b4ccee" stroke-width="0.9"/><circle cx="7.4" cy="6.6" r="1.4" fill="none" stroke="#6aa2d8" stroke-width="0.8"/><path d="M7.4 8 L7.4 10.6" stroke="#7aaee0" stroke-width="0.7"/></g></svg>
<div class="t" style="left:343.50px;top:371.97px;font-size:9px;font-weight:normal;color:#161412;letter-spacing:0.1px;">Stocks</div>
<div class="t" style="left:583.50px;top:371.97px;font-size:9px;font-weight:normal;color:#161412;">Investment</div>
<div class="t" style="left:637.00px;width:400px;text-align:right;top:371.97px;font-size:9px;font-weight:normal;color:#161412;letter-spacing:0.1px;">$ 0,00</div>
<svg class="b" style="left:338px;top:385px" width="14" height="16" viewBox="0 0 14 16"><g transform="translate(0,1.70)"><defs><linearGradient id="ig" x1="0" y1="0" x2="0" y2="1"><stop offset="0" stop-color="#f2f5fa"/><stop offset="1" stop-color="#e2e8f0"/></linearGradient></defs><rect x="1.5" y="3.1" width="11.8" height="8.4" fill="url(#ig)" stroke="#b4ccee" stroke-width="0.9"/><circle cx="7.4" cy="6.6" r="1.4" fill="none" stroke="#6aa2d8" stroke-width="0.8"/><path d="M7.4 8 L7.4 10.6" stroke="#7aaee0" stroke-width="0.7"/></g></svg>
<div class="t" style="left:356.70px;top:386.43px;font-size:9px;font-weight:normal;color:#161412;letter-spacing:0.1px;">Advanced Micro Devices, Inc.</div>
<div class="t" style="left:583.50px;top:386.43px;font-size:9px;font-weight:normal;color:#161412;">Stock</div>
<div class="t" style="left:445.00px;width:400px;text-align:right;top:386.43px;font-size:9px;font-weight:normal;color:#161412;">AMD 40,00</div>
<div class="t" style="left:637.00px;width:400px;text-align:right;top:386.43px;font-size:9px;font-weight:normal;color:#161412;letter-spacing:0.1px;">$ 305,20</div>
<svg class="b" style="left:338px;top:399px" width="14" height="16" viewBox="0 0 14 16"><g transform="translate(0,2.16)"><defs><linearGradient id="ig" x1="0" y1="0" x2="0" y2="1"><stop offset="0" stop-color="#f2f5fa"/><stop offset="1" stop-color="#e2e8f0"/></linearGradient></defs><rect x="1.5" y="3.1" width="11.8" height="8.4" fill="url(#ig)" stroke="#b4ccee" stroke-width="0.9"/><circle cx="7.4" cy="6.6" r="1.4" fill="none" stroke="#6aa2d8" stroke-width="0.8"/><path d="M7.4 8 L7.4 10.6" stroke="#7aaee0" stroke-width="0.7"/></g></svg>
<div class="t" style="left:356.70px;top:400.89px;font-size:9px;font-weight:normal;color:#161412;letter-spacing:0.1px;">Google Inc.</div>
<div class="t" style="left:583.50px;top:400.89px;font-size:9px;font-weight:normal;color:#161412;">Stock</div>
<div class="t" style="left:445.00px;width:400px;text-align:right;top:400.89px;font-size:9px;font-weight:normal;color:#161412;">GOOG 5,00</div>
<div class="t" style="left:637.00px;width:400px;text-align:right;top:400.89px;font-size:9px;font-weight:normal;color:#161412;letter-spacing:0.1px;">$ 3016,45</div>
<svg class="b" style="left:338px;top:414px" width="14" height="16" viewBox="0 0 14 16"><g transform="translate(0,1.62)"><defs><linearGradient id="ig" x1="0" y1="0" x2="0" y2="1"><stop offset="0" stop-color="#f2f5fa"/><stop offset="1" stop-color="#e2e8f0"/></linearGradient></defs><rect x="1.5" y="3.1" width="11.8" height="8.4" fill="url(#ig)" stroke="#b4ccee" stroke-width="0.9"/><circle cx="7.4" cy="6.6" r="1.4" fill="none" stroke="#6aa2d8" stroke-width="0.8"/><path d="M7.4 8 L7.4 10.6" stroke="#7aaee0" stroke-width="0.7"/></g></svg>
<div class="t" style="left:356.70px;top:415.35px;font-size:9px;font-weight:normal;color:#161412;letter-spacing:0.1px;">Intel Corporation</div>
<div class="t" style="left:583.50px;top:415.35px;font-size:9px;font-weight:normal;color:#161412;">Stock</div>
<div class="t" style="left:445.00px;width:400px;text-align:right;top:415.35px;font-size:9px;font-weight:normal;color:#161412;">INTC 40,00</div>
<div class="t" style="left:637.00px;width:400px;text-align:right;top:415.35px;font-size:9px;font-weight:normal;color:#161412;letter-spacing:0.1px;">$ 861,20</div>
<svg class="b" style="left:338px;top:428px" width="14" height="16" viewBox="0 0 14 16"><g transform="translate(0,2.08)"><defs><linearGradient id="ig" x1="0" y1="0" x2="0" y2="1"><stop offset="0" stop-color="#f2f5fa"/><stop offset="1" stop-color="#e2e8f0"/></linearGradient></defs><rect x="1.5" y="3.1" width="11.8" height="8.4" fill="url(#ig)" stroke="#b4ccee" stroke-width="0.9"/><circle cx="7.4" cy="6.6" r="1.4" fill="none" stroke="#6aa2d8" stroke-width="0.8"/><path d="M7.4 8 L7.4 10.6" stroke="#7aaee0" stroke-width="0.7"/></g></svg>
<div class="t" style="left:356.70px;top:429.81px;font-size:9px;font-weight:normal;color:#161412;letter-spacing:0.1px;">International Business Machines Corp (IBM)</div>
<div class="t" style="left:583.50px;top:429.81px;font-size:9px;font-weight:normal;color:#161412;">Stock</div>
<div class="t" style="left:445.00px;width:400px;text-align:right;top:429.81px;font-size:9px;font-weight:normal;color:#161412;">IBM 94,00</div>
<div class="t" style="left:637.00px;width:400px;text-align:right;top:429.81px;font-size:9px;font-weight:normal;color:#161412;letter-spacing:0.1px;">$ 13511,56</div>
<svg class="b" style="left:338px;top:443px" width="14" height="16" viewBox="0 0 14 16"><g transform="translate(0,1.54)"><defs><linearGradient id="ig" x1="0" y1="0" x2="0" y2="1"><stop offset="0" stop-color="#f2f5fa"/><stop offset="1" stop-color="#e2e8f0"/></linearGradient></defs><rect x="1.5" y="3.1" width="11.8" height="8.4" fill="url(#ig)" stroke="#b4ccee" stroke-width="0.9"/><circle cx="7.4" cy="6.6" r="1.4" fill="none" stroke="#6aa2d8" stroke-width="0.8"/><path d="M7.4 8 L7.4 10.6" stroke="#7aaee0" stroke-width="0.7"/></g></svg>
<div class="t" style="left:356.70px;top:444.27px;font-size:9px;font-weight:normal;color:#161412;letter-spacing:0.1px;">Novell, Inc.</div>
<div class="t" style="left:583.50px;top:444.27px;font-size:9px;font-weight:normal;color:#161412;">Stock</div>
<div class="t" style="left:445.00px;width:400px;text-align:right;top:444.27px;font-size:9px;font-weight:normal;color:#161412;">NOVL 1500,00</div>
<div class="t" style="left:637.00px;width:400px;text-align:right;top:444.27px;font-size:9px;font-weight:normal;color:#161412;letter-spacing:0.1px;">$ 8745,00</div>
<svg class="b" style="left:338px;top:457px" width="14" height="16" viewBox="0 0 14 16"><g transform="translate(0,2.00)"><defs><linearGradient id="ig" x1="0" y1="0" x2="0" y2="1"><stop offset="0" stop-color="#f2f5fa"/><stop offset="1" stop-color="#e2e8f0"/></linearGradient></defs><rect x="1.5" y="3.1" width="11.8" height="8.4" fill="url(#ig)" stroke="#b4ccee" stroke-width="0.9"/><circle cx="7.4" cy="6.6" r="1.4" fill="none" stroke="#6aa2d8" stroke-width="0.8"/><path d="M7.4 8 L7.4 10.6" stroke="#7aaee0" stroke-width="0.7"/></g></svg>
<div class="t" style="left:356.70px;top:458.73px;font-size:9px;font-weight:normal;color:#161412;letter-spacing:0.1px;">RED HAT INC</div>
<div class="t" style="left:583.50px;top:458.73px;font-size:9px;font-weight:normal;color:#161412;">Stock</div>
<div class="t" style="left:445.00px;width:400px;text-align:right;top:458.73px;font-size:9px;font-weight:normal;color:#161412;">RHAT 500,00</div>
<div class="t" style="left:637.00px;width:400px;text-align:right;top:458.73px;font-size:9px;font-weight:normal;color:#161412;letter-spacing:0.1px;">$ 7130,00</div>
<svg class="b" style="left:338px;top:471px" width="14" height="16" viewBox="0 0 14 16"><g transform="translate(0,2.46)"><defs><linearGradient id="ig" x1="0" y1="0" x2="0" y2="1"><stop offset="0" stop-color="#f2f5fa"/><stop offset="1" stop-color="#e2e8f0"/></linearGradient></defs><rect x="1.5" y="3.1" width="11.8" height="8.4" fill="url(#ig)" stroke="#b4ccee" stroke-width="0.9"/><circle cx="7.4" cy="6.6" r="1.4" fill="none" stroke="#6aa2d8" stroke-width="0.8"/><path d="M7.4 8 L7.4 10.6" stroke="#7aaee0" stroke-width="0.7"/></g></svg>
<div class="t" style="left:356.70px;top:473.19px;font-size:9px;font-weight:normal;color:#161412;letter-spacing:0.1px;">Sun Microsystems, Inc.</div>
<div class="t" style="left:583.50px;top:473.19px;font-size:9px;font-weight:normal;color:#161412;">Stock</div>
<div class="t" style="left:445.00px;width:400px;text-align:right;top:473.19px;font-size:9px;font-weight:normal;color:#161412;">SUNW 500,00</div>
<div class="t" style="left:637.00px;width:400px;text-align:right;top:473.19px;font-size:9px;font-weight:normal;color:#161412;letter-spacing:0.1px;">$ 1940,00</div>
<svg class="b" style="left:338px;top:486px" width="14" height="16" viewBox="0 0 14 16"><g transform="translate(0,1.92)"><defs><linearGradient id="ig" x1="0" y1="0" x2="0" y2="1"><stop offset="0" stop-color="#f2f5fa"/><stop offset="1" stop-color="#e2e8f0"/></linearGradient></defs><rect x="1.5" y="3.1" width="11.8" height="8.4" fill="url(#ig)" stroke="#b4ccee" stroke-width="0.9"/><circle cx="7.4" cy="6.6" r="1.4" fill="none" stroke="#6aa2d8" stroke-width="0.8"/><path d="M7.4 8 L7.4 10.6" stroke="#7aaee0" stroke-width="0.7"/></g></svg>
<div class="t" style="left:356.70px;top:487.65px;font-size:9px;font-weight:normal;color:#161412;letter-spacing:0.1px;">Yahoo! Inc.</div>
<div class="t" style="left:583.50px;top:487.65px;font-size:9px;font-weight:normal;color:#161412;">Stock</div>
<div class="t" style="left:445.00px;width:400px;text-align:right;top:487.65px;font-size:9px;font-weight:normal;color:#161412;">YHOO 50,00</div>
<div class="t" style="left:637.00px;width:400px;text-align:right;top:487.65px;font-size:9px;font-weight:normal;color:#161412;letter-spacing:0.1px;">$ 827,50</div>
<svg class="b" style="left:325px;top:500px" width="14" height="16" viewBox="0 0 14 16"><g transform="translate(0,1.38)"><rect x="1" y="0.5" width="10.5" height="13" fill="#f2f8fc" stroke="#b8c0cc" stroke-width="0.6"/><rect x="1.4" y="1" width="9.7" height="1.2" fill="#5aa0dc"/><path d="M2.5 3.5 v9 M6 3.5 v9 M9.5 3.5 v9" stroke="#b8dcf4" stroke-width="0.5"/><path d="M3 5 h2 M7 6 h2" stroke="#e8a0a0" stroke-width="0.5"/><path d="M2.8 7.2 q0 -1.6 2 -1.6 h3 l1 -1 l0.6 1 q1.6 0.2 1.6 1.6 q0 1.5 -1.6 1.5 h-5 q-1.6 0 -1.6 -1.5 z" fill="#5cccf4"/><rect x="6" y="9.6" width="8" height="4.2" fill="#d0d8a8" stroke="#7a8450" stroke-width="0.4"/><path d="M6.5 11.5 q0 -1.5 1.8 -1.5 h2.5 l0.8 -0.8 l0.5 0.8 q1.8 0.2 1.8 1.5 q0 1.3 -1.6 1.3 h-4.2 q-1.6 0 -1.6 -1.3 z" fill="#6ad4f8"/></g></svg>
<div class="t" style="left:343.50px;top:502.11px;font-size:9px;font-weight:normal;color:#161412;letter-spacing:0.1px;">Stocks (Brokerage)</div>
<div class="t" style="left:583.50px;top:502.11px;font-size:9px;font-weight:normal;color:#161412;">Checking</div>
<div class="t" style="left:637.00px;width:400px;text-align:right;top:502.11px;font-size:9px;font-weight:normal;color:#161412;letter-spacing:0.1px;">$ -28620,00</div>
<div class="b" style="left:296.5px;top:623.5px;width:673.5px;height:11.5px;border-radius:3px;background:#fff;box-shadow:inset 0 1px 1px rgba(0,0,0,0.15), 0 0 0 0.6px #b4aeaa"></div>
<div class="b" style="left:977px;top:623px;width:28px;height:13.5px;border-radius:3px;background:linear-gradient(to bottom,#e8e6e4,#d4d0cd);box-shadow:0 1px 1px rgba(0,0,0,0.25), inset 0 0 0 0.6px #b8b2ae"></div>
<div class="b" style="left:1011px;top:623px;width:28px;height:13.5px;border-radius:3px;background:linear-gradient(to bottom,#e8e6e4,#d4d0cd);box-shadow:0 1px 1px rgba(0,0,0,0.25), inset 0 0 0 0.6px #b8b2ae"></div>
<svg class="b" style="left:986px;top:624px" width="12" height="11" viewBox="0 0 12 11"><circle cx="5" cy="4.5" r="3.2" fill="#dce8f6" stroke="#7a9ccc" stroke-width="0.9"/><path d="M3.3 4.5 h3.4" stroke="#5a7cb0" stroke-width="0.9"/><path d="M7.2 6.8 L9.5 9" stroke="#8a8a8a" stroke-width="1"/></svg>
<svg class="b" style="left:1019.5px;top:624px" width="12" height="11" viewBox="0 0 12 11"><circle cx="5" cy="4.5" r="3.2" fill="#dce8f6" stroke="#7a9ccc" stroke-width="0.9"/><path d="M5 2.8 v3.4" stroke="#5a7cb0" stroke-width="0.9"/><path d="M7.2 6.8 L9.5 9" stroke="#8a8a8a" stroke-width="1"/></svg>
<div class="t" style="left:640.50px;width:400px;text-align:right;top:642.88px;font-size:9px;font-weight:normal;color:#1e1c1a;letter-spacing:0.13px;">Net Worth: $ 359886,10</div>
<div class="t" style="left:821.60px;top:659.78px;font-size:9px;font-weight:normal;color:#1e1c1a;letter-spacing:-0.35px;">Ready.</div>
<svg class="b" style="left:204px;top:55px" width="16" height="18" viewBox="0 0 16 18"><path d="M1.5 3 h8 v0 l0 0 h0 L12.5 3 v10 l-3 3.5 h-8 z" fill="#fafafa" stroke="#b8b8b8" stroke-width="0.7"/><path d="M9.5 16.5 l0 -3 l3 -0.5" fill="#e4e4e4" stroke="#b0b0b0" stroke-width="0.5"/><circle cx="11.8" cy="6" r="4.1" fill="#1aa81a" stroke="#0b7a0b" stroke-width="0.5"/><path d="M11.8 3.6 v4.8 M9.4 6 h4.8" stroke="#fff" stroke-width="1.6"/></svg>
<svg class="b" style="left:225px;top:56px" width="16" height="17" viewBox="0 0 16 17"><path d="M1.2 2.5 h2 v7 h-2 z" fill="#1e3c78"/><path d="M11 4.5 l3.6 0 v5 h-3.6 z" fill="#3a74c8"/><path d="M2.8 1.2 h6.5 l4.2 4.3 v5 h-10.7 z" fill="#fafafa" stroke="#b4b4b4" stroke-width="0.5"/><path d="M9.3 1.2 q-0.4 3.2 0.4 4.3 h3.8" fill="#e6e6e6" stroke="#a8a8a8" stroke-width="0.5"/><path d="M0.8 8.3 h14.4 v6.8 q0 0.8 -0.8 0.8 h-12.8 q-0.8 0 -0.8 -0.8 z" fill="#7aa6e0" stroke="#4a7ac0" stroke-width="0.5"/><rect x="1.1" y="12.6" width="13.8" height="1.6" fill="#4e84cc"/><rect x="1.1" y="8.6" width="13.8" height="1" fill="#9cc0ee"/></svg>
<svg class="b" style="left:246px;top:57px" width="15" height="15" viewBox="0 0 15 15"><path d="M0.8 0.8 h13 v13.2 h-12 l-1 -1 z" fill="#8a8a8a" stroke="#6a6a6a" stroke-width="0.5"/><rect x="3" y="1.2" width="9" height="6" fill="#eeeeee"/><rect x="4.2" y="2.8" width="6.6" height="2.4" fill="#d6d6d6"/><rect x="3.4" y="9" width="7" height="5" fill="#dcdcdc"/><rect x="4.4" y="9.8" width="1.8" height="3.5" fill="#6a6a6a"/></svg>
<svg class="b" style="left:266px;top:56px" width="16" height="16" viewBox="0 0 16 16"><rect x="3.6" y="1.6" width="8" height="5.6" fill="#f0f0f0" stroke="#a8a8a8" stroke-width="0.7"/><path d="M1 5.5 h14 v3.4 h-14 z" fill="#e4e4e4" stroke="#c4c4c4" stroke-width="0.5"/><rect x="3.6" y="7.2" width="8" height="1.3" fill="#8a8a8a"/><rect x="3.6" y="10" width="8" height="5" fill="#f4f4f4" stroke="#9a9a9a" stroke-width="0.7"/><path d="M1 10.5 h2 M12.5 10.5 h2" stroke="#c8c8c8" stroke-width="0.8"/></svg>
<div class="b" style="left:286px;top:56px;width:1px;height:16px;background:linear-gradient(to bottom,rgba(180,176,172,0),#bcb8b4 30%,#bcb8b4 70%,rgba(180,176,172,0))"></div>
<div class="b" style="left:331px;top:56px;width:1px;height:16px;background:linear-gradient(to bottom,rgba(180,176,172,0),#bcb8b4 30%,#bcb8b4 70%,rgba(180,176,172,0))"></div>
<div class="b" style="left:464px;top:56px;width:1px;height:16px;background:linear-gradient(to bottom,rgba(180,176,172,0),#bcb8b4 30%,#bcb8b4 70%,rgba(180,176,172,0))"></div>
<div class="b" style="left:489px;top:56px;width:1px;height:16px;background:linear-gradient(to bottom,rgba(180,176,172,0),#bcb8b4 30%,#bcb8b4 70%,rgba(180,176,172,0))"></div>
<svg class="b" style="left:290px;top:55px" width="18" height="17" viewBox="0 0 18 17"><defs><linearGradient id="plg" x1="0" y1="0" x2="0" y2="1"><stop offset="0" stop-color="#70d850"/><stop offset="1" stop-color="#0a7a0a"/></linearGradient></defs><path d="M1.8 6.5 L9 4.6 L16 6.5 Z" fill="#f4f4f4"/><rect x="1.8" y="6.5" width="14" height="8.8" fill="#f2f2f2"/><path d="M3.5 7.5 v7 M5.5 7.5 v7 M11.5 7.5 v7 M13.8 7.5 v7" stroke="#dadada" stroke-width="0.8"/><rect x="6.8" y="7.2" width="2.4" height="3.2" fill="#c8c8c8"/><ellipse cx="8" cy="11.6" rx="1.1" ry="1.6" fill="#111"/><rect x="1.2" y="14.6" width="15" height="1.2" fill="#dcdcdc"/><path d="M11.3 2 h2.4 v2.7 h2.7 v2.4 h-2.7 v2.7 h-2.4 v-2.7 h-2.7 v-2.4 h2.7 z" fill="url(#plg)"/></svg>
<svg class="b" style="left:311px;top:55px" width="17" height="18" viewBox="0 0 17 18"><rect x="1.2" y="2.2" width="11.5" height="13.8" fill="#f6f8fb" stroke="#a8b0bc" stroke-width="0.6"/><rect x="1.6" y="2.6" width="10.7" height="1.4" fill="#5aa0e0"/><path d="M2.5 5.5 v9 M6.5 5.5 v9 M10.5 5.5 v9" stroke="#a8d0f0" stroke-width="0.6"/><path d="M3.2 7 h2 M3.2 9 h2 M7.2 8 h2" stroke="#d07070" stroke-width="0.6"/><rect x="7.2" y="12.3" width="7.6" height="4.6" fill="#d4d8b0" stroke="#7a8450" stroke-width="0.5"/><rect x="9.8" y="13.5" width="2.4" height="2.2" fill="#5a6a3a"/><path d="M10.6 2 h2.4 v2.7 h2.7 v2.4 h-2.7 v2.7 h-2.4 v-2.7 h-2.7 v-2.4 h2.7 z" fill="url(#plg)"/></svg>
<svg class="b" style="left:337px;top:57px" width="14" height="15" viewBox="0 0 14 15"><rect x="1" y="0.8" width="11.5" height="13.4" fill="#eeeeee" stroke="#d6d6d6" stroke-width="0.6"/><path d="M3 3 h7 M3 6 h7 M3 9 h7 M6.5 2 v11" stroke="#dcdcdc" stroke-width="0.6"/></svg>
<svg class="b" style="left:357px;top:57px" width="16" height="15" viewBox="0 0 16 15"><rect x="0.8" y="0.8" width="11.5" height="13.4" fill="#ececec" stroke="#d4d4d4" stroke-width="0.6"/><path d="M2.5 3 h8 M2.5 6 h8 M2.5 9 h6 M6.5 2 v11" stroke="#d8d8d8" stroke-width="0.6"/><path d="M8.5 13.5 L14 7.5" stroke="#b8b8b8" stroke-width="1.5"/></svg>
<svg class="b" style="left:378px;top:58px" width="14" height="13" viewBox="0 0 14 13"><path d="M1 2 q4 0 5.5 4.5 q1.5 -4.5 5.5 -4.5 M6.5 6.5 h6 M1 11 q4 0 5.5 -4.5" stroke="#d4d4d4" stroke-width="1.6" fill="none"/></svg>
<svg class="b" style="left:399px;top:56px" width="20" height="17" viewBox="0 0 20 17"><rect x="1.3" y="1.3" width="11.5" height="13.5" fill="#f6f8fb" stroke="#b0b8c4" stroke-width="0.6"/><rect x="1.7" y="1.7" width="10.7" height="1.3" fill="#70a8e0"/><path d="M3 4.5 v9 M7 4.5 v9 M11 4.5 v9" stroke="#b0d4f2" stroke-width="0.6"/><path d="M3.8 6 h1.8 M3.8 8 h1.8 M8 7 h1.8" stroke="#d07878" stroke-width="0.6"/><rect x="6.5" y="12" width="6" height="3.5" fill="#d8dcb0" stroke="#8a8a50" stroke-width="0.4"/><circle cx="12" cy="11.3" r="3.3" fill="#2a5ac8" stroke="#183a90" stroke-width="0.4"/><path d="M10.3 10 q1.5 -1.3 3 0.2 q-0.5 1.8 -2 2.2" fill="#70b0f0"/><path d="M15 13.2 l1.3 1.3 l2.5 -3" stroke="#111" stroke-width="1" fill="none"/></svg>
<svg class="b" style="left:422px;top:57px" width="17" height="15" viewBox="0 0 17 15"><ellipse cx="2.2" cy="7.8" rx="1.7" ry="2.4" fill="#58c4ee"/><ellipse cx="5.6" cy="7.2" rx="1.7" ry="2.6" fill="#58c4ee"/><rect x="8" y="4" width="3.2" height="7" rx="1.2" fill="#56c2ee"/><rect x="12.2" y="0.8" width="3.4" height="10" rx="1.4" fill="#44b6ea"/><rect x="6" y="11" width="8" height="3.6" fill="#d8dcb0" stroke="#8a8a50" stroke-width="0.4"/><circle cx="11" cy="11" r="3.2" fill="#2a5ac8" stroke="#183a90" stroke-width="0.4"/><path d="M9.4 9.8 q1.5 -1.3 3 0.2 q-0.5 1.8 -2 2.2" fill="#70b0f0"/></svg>
<svg class="b" style="left:444px;top:57px" width="14" height="15" viewBox="0 0 14 15"><path d="M1 0.5 v13.5 h12" stroke="#bcbcbc" stroke-width="0.7" fill="none"/><path d="M2.5 11 q2 -5 4.5 -4 q2 1 2.5 2 q1.5 1 3 -5 M2.5 12 q3 -8 6 -6 q2 2 3.5 -1" stroke="#b0b0b0" stroke-width="0.8" fill="none"/></svg>
<svg class="b" style="left:469px;top:58px" width="16" height="14" viewBox="0 0 16 14"><path d="M1 3.6 q0 -2 2.5 -2 l0.5 -1 l1 1 h2.5 q1.5 0 1.5 1.8 q0 1.8 -1.5 1.8 h-5 q-1.5 0 -1.5 -1.6 z" fill="#5ad0f4"/><ellipse cx="4.2" cy="9.8" rx="2.4" ry="2.6" fill="#e0e4b8" stroke="#c0c890" stroke-width="0.4"/><path d="M5.5 7.5 q0 -2 2.5 -2 l0.5 -1 l1 1 h2.5 q1.5 0 1.5 1.8 q0 1.8 -1.5 1.8 h-5 q-1.5 0 -1.5 -1.6 z" fill="#5ad0f4"/><path d="M8 9 l2 0 l0.6 1 l0.6 -1 h2 l1.4 3.5 q-0.8 1.5 -2.2 0.5 l-0.6 -1 l-0.6 1 q-1.4 1 -2.4 -0.5 z" fill="#2a1a14"/><ellipse cx="8.6" cy="12.2" rx="1.4" ry="1" fill="#a8400a"/><ellipse cx="13.2" cy="12.2" rx="1.4" ry="1" fill="#a8400a"/></svg>
<svg class="b" style="left:495px;top:57px" width="12" height="16" viewBox="0 0 12 16"><rect x="1.6" y="0.8" width="9" height="14" rx="0.6" fill="#e2e2e2" stroke="#8a8a8a" stroke-width="0.6"/><rect x="2.3" y="1.5" width="7.6" height="2.6" rx="0.5" fill="#3a3a3a"/><rect x="3" y="2" width="6.2" height="1.5" fill="#8aa070"/><g fill="#3c3c3c"><rect x="2.4" y="5.2" width="7.4" height="2"/><rect x="2.4" y="8.4" width="7.4" height="2"/><rect x="2.4" y="11.2" width="7.4" height="2"/></g><g fill="#e2e2e2"><rect x="4.6" y="5" width="0.5" height="8.5"/><rect x="7.3" y="5" width="0.5" height="8.5"/></g><rect x="2.4" y="13.8" width="7.4" height="0.6" fill="#9a9a9a"/></svg>
<svg class="b" style="left:239px;top:84px" width="21" height="20" viewBox="0 0 21 20"><path d="M14 2.8 h2.5 v4 l-2.5 -2 z" fill="#e8e8e8" stroke="#555" stroke-width="0.5"/><path d="M3 9 L10.2 2.2 L17.5 9 V18 H3 Z" fill="#f6f6f6" stroke="#c0c0c0" stroke-width="0.4"/><path d="M1.3 10.3 L10.2 1.8 L19.2 10.3" stroke="#3a3a3a" stroke-width="1.4" fill="none"/><rect x="8.2" y="11.2" width="4" height="6.5" fill="#d0600a" stroke="#7a4018" stroke-width="0.5"/><rect x="8.2" y="16.6" width="4" height="1.2" fill="#2a8a2a"/><rect x="3.6" y="11.5" width="3" height="3.4" fill="#dde6f0" stroke="#8a6a4a" stroke-width="0.6"/><rect x="13.8" y="11.5" width="3" height="3.4" fill="#dde6f0" stroke="#8a6a4a" stroke-width="0.6"/><rect x="2" y="17.8" width="16.5" height="1.2" fill="#2a2a2a"/></svg>
<svg class="b" style="left:238px;top:122px" width="22" height="18" viewBox="0 0 22 18"><path d="M1.5 5.5 L11 1 L20.5 5.5 Z" fill="#fafafa" stroke="#b8b8b8" stroke-width="0.5"/><rect x="1.5" y="5.5" width="19" height="1.8" fill="#e4e4e4" stroke="#c4c4c4" stroke-width="0.3"/><g fill="#f2f2f2" stroke="#c8c8c8" stroke-width="0.3"><rect x="2.5" y="7.3" width="2.6" height="7.5"/><rect x="6.2" y="7.3" width="2.6" height="7.5"/><rect x="13.2" y="7.3" width="2.6" height="7.5"/><rect x="16.9" y="7.3" width="2.6" height="7.5"/></g><rect x="9.3" y="9.5" width="3.4" height="5.3" fill="#ffffff"/><rect x="10" y="10.5" width="2" height="4.3" fill="#141414"/><rect x="0.8" y="14.8" width="20.4" height="2.4" fill="#e0e0e0" stroke="#b8b8b8" stroke-width="0.3"/></svg>
<svg class="b" style="left:238px;top:157px" width="23" height="22" viewBox="0 0 23 22"><rect x="1.5" y="1.5" width="17" height="19" fill="#f4f7fb" stroke="#9aa2ac" stroke-width="0.7"/><rect x="2.5" y="3" width="15" height="1.4" fill="#5aa6e0"/><path d="M3.5 5.5 v13 M9.5 5.5 v13 M15.5 5.5 v13 M3.5 18.5 h12" stroke="#98cdf0" stroke-width="0.7"/><path d="M4.5 8 h3 M4.5 10 h3 M4.5 12 h2" stroke="#b0b0b0" stroke-width="0.6"/><path d="M10.5 8 h2 M10.5 11 h2" stroke="#e06060" stroke-width="0.7"/><path d="M13 9.5 h2" stroke="#60b060" stroke-width="0.7"/><rect x="8" y="14" width="13.5" height="7" fill="#d8dcb8" stroke="#6a7040" stroke-width="0.7"/><rect x="9.5" y="15.3" width="10.5" height="4.4" fill="#e6e8c8"/><circle cx="14.7" cy="17.5" r="1.8" fill="#5a6438"/></svg>
<svg class="b" style="left:238px;top:193px" width="22" height="23" viewBox="0 0 22 23"><defs><linearGradient id="calg" x1="0" y1="0" x2="0" y2="1"><stop offset="0" stop-color="#ffffff"/><stop offset="0.72" stop-color="#f6f6f6"/><stop offset="0.85" stop-color="#c8c8c8"/><stop offset="1" stop-color="#6a6a6a"/></linearGradient><linearGradient id="cals" x1="0" y1="0" x2="1" y2="0"><stop offset="0" stop-color="#9a9a9a"/><stop offset="0.12" stop-color="#ffffff" stop-opacity="0"/><stop offset="0.88" stop-color="#ffffff" stop-opacity="0"/><stop offset="1" stop-color="#9a9a9a"/></linearGradient></defs><rect x="1.2" y="3" width="19.7" height="18.7" rx="1.6" fill="url(#calg)"/><rect x="1.2" y="3" width="19.7" height="18.7" rx="1.6" fill="url(#cals)"/><path d="M2 1.8 h18 q0.9 0 0.9 0.9 v4.1 h-19.8 v-4.1 q0 -0.9 0.9 -0.9 z" fill="#3cc024"/><rect x="2" y="1.8" width="18" height="1.4" fill="#1ea010"/><rect x="5.3" y="1" width="1.6" height="2.6" rx="0.8" fill="#e0cce0"/><rect x="16.3" y="1" width="1.6" height="2.6" rx="0.8" fill="#e0cce0"/><text x="11.3" y="15.6" text-anchor="middle" font-family="Liberation Sans" font-weight="bold" font-size="10.6" fill="#141414">14</text><path d="M15 18.5 q3 -0.5 5 -3 v3 z" fill="#d8d8d8"/></svg>
<svg class="b" style="left:238px;top:240px" width="23" height="22" viewBox="0 0 23 22"><rect x="1.5" y="1" width="16" height="18.5" fill="#f8f8f8" stroke="#b0b0b0" stroke-width="0.6"/><path d="M3 3 h12 M3 5 h12" stroke="#c8c8c8" stroke-width="0.6"/><path d="M11 4.2 h2" stroke="#e06060" stroke-width="0.8"/><path d="M13.5 5 h2" stroke="#60b060" stroke-width="0.8"/><path d="M3 8 h6 M3 10.5 h6 M3 13 h6 M3 15.5 h6" stroke="#a8ccec" stroke-width="0.8"/><rect x="11.5" y="8.5" width="10" height="12.5" fill="#f4f4f4" stroke="#8a8a8a" stroke-width="0.6"/><rect x="11.8" y="8.8" width="9.4" height="2.2" fill="#3a5a9a"/><path d="M13.5 12 v8 M15.8 12 v8 M18 12 v8" stroke="#2a2a2a" stroke-width="0.9"/><rect x="19.5" y="17.5" width="1.5" height="1.5" fill="#3a7ad8"/></svg>
<svg class="b" style="left:240px;top:276px" width="19" height="22" viewBox="0 0 19 22"><rect x="1.5" y="1.2" width="16" height="19.5" fill="#f8f8f8" stroke="#b8b8b8" stroke-width="0.6"/><rect x="12" y="3" width="4" height="4.5" fill="#2a5ad0"/><path d="M3 4 h7 M3 6 h6 M3 9 h9 M3 11 h8 M3 13.5 h11" stroke="#c0c0c0" stroke-width="0.6"/><rect x="1.8" y="14.5" width="10" height="5.5" fill="#fafafa" stroke="#8a8a8a" stroke-width="0.5"/><rect x="3" y="15" width="8" height="1.3" fill="#8ac8f0"/><path d="M4 17.5 h3" stroke="#e0a0a0" stroke-width="1"/><path d="M8.5 17.5 h2" stroke="#70c070" stroke-width="1"/><path d="M0.5 15.5 h2 M0.5 17.3 h2 M0.5 19 h2" stroke="#2a2a2a" stroke-width="0.8"/></svg>
<svg class="b" style="left:238px;top:314px" width="24" height="20" viewBox="0 0 24 20"><path d="M11.5 13.8 q0.5 -3.5 2.5 -4 h3.5 q2.5 0.5 3.5 4 z" fill="#f0c8a0"/><path d="M12.8 5.5 q0 -4 3.2 -4 q3.2 0 3.2 4 q0.3 3.5 0.6 7 l-1.2 1 q-0.8 -3 -1 -5.5 z" fill="#5a2a14"/><ellipse cx="15.8" cy="5.6" rx="2.3" ry="2.8" fill="#f6d4b4"/><path d="M13.5 4.2 q1 -2.6 4.2 -1.6 q-1.6 0.4 -4.2 1.6 z" fill="#5a2a14"/><path d="M1.2 17.6 q0 -3.8 3 -4.4 h7.4 q3 0.6 3 4.4 q0 1.6 -2 1.6 h-9.4 q-2 0 -2 -1.6 z" fill="#f4f4fa" stroke="#c8cce0" stroke-width="0.7"/><rect x="6.6" y="10.5" width="2.6" height="3" fill="#e8b890"/><ellipse cx="7.9" cy="7.6" rx="2.9" ry="3.4" fill="#f4d0b0"/><path d="M5 6.8 q0 -3.6 2.9 -3.6 q3 0 3 3.6 q-1 -1.6 -3 -1.6 q-2 0 -2.9 1.6 z" fill="#b08058"/></svg>
<svg class="b" style="left:240px;top:350px" width="19" height="22" viewBox="0 0 19 22"><rect x="1" y="1" width="17" height="19.5" fill="#fbfbfb" stroke="#a8a8a8" stroke-width="0.8"/><rect x="2.6" y="2.6" width="13.8" height="16.3" fill="#ffffff" stroke="#dcdcdc" stroke-width="0.4"/><path d="M7.5 3 v13 M12 3 v13" stroke="#c8c8c8" stroke-width="0.5"/><path d="M3.5 5 h2.8 M3.5 8 h2.8 M3.5 11 h2.8" stroke="#b0b0b0" stroke-width="0.7"/><path d="M8.5 5.5 h2.2 M8.5 8.5 h2.2 M8.5 11.5 h2.2" stroke="#e07878" stroke-width="0.8"/><path d="M13 4.5 h2.2 M13 8 h2.2" stroke="#58c058" stroke-width="0.8"/><path d="M3.5 16.5 h12" stroke="#909090" stroke-width="0.6"/></svg>
<svg class="b" style="left:238px;top:388px" width="22" height="21" viewBox="0 0 22 21"><defs><linearGradient id="cyl" x1="0" y1="0" x2="1" y2="0"><stop offset="0" stop-color="#2aa8e0"/><stop offset="0.4" stop-color="#8adaf8"/><stop offset="1" stop-color="#1a94d0"/></linearGradient></defs><g fill="url(#cyl)"><rect x="0.6" y="10" width="4" height="7" rx="2"/><rect x="5" y="8" width="4" height="9" rx="2"/><rect x="9.4" y="5" width="4" height="12" rx="2"/><rect x="13.8" y="0.8" width="4.2" height="16.2" rx="2.1"/></g><rect x="7.5" y="13.6" width="13.6" height="6.6" fill="#d8dcb8" stroke="#707850" stroke-width="0.7"/><rect x="9" y="14.9" width="10.6" height="4" fill="#f0f2e0"/><rect x="12.8" y="15.6" width="3" height="2.6" fill="#6a7448"/></svg>
<svg class="b" style="left:239px;top:425px" width="21" height="20" viewBox="0 0 21 20"><path d="M1.5 0.5 v18.5 h18" stroke="#9a9a9a" stroke-width="0.7" fill="none"/><g fill="#d8e8f8" stroke="#3a6ac0" stroke-width="0.7"><rect x="4" y="9" width="3.5" height="9.5" rx="1.5"/><rect x="9" y="6.5" width="3.5" height="12" rx="1.5"/><rect x="14" y="8" width="3.5" height="10.5" rx="1.5"/></g><path d="M5 10 v8 M10 7.5 v10.5 M15 9 v9" stroke="#6a9ae0" stroke-width="1"/></svg>
<svg class="b" style="left:238px;top:462px" width="22" height="21" viewBox="0 0 22 21"><rect x="1.5" y="1" width="18" height="16" fill="#fafafa" stroke="#9aa" stroke-width="0.6"/><rect x="1.5" y="1" width="18" height="2.8" fill="#2a8a9a"/><path d="M4 6 h6" stroke="#40c040" stroke-width="1.6"/><path d="M3 9 h5 M3 11.5 h4 M3 14 h5" stroke="#a0c8e8" stroke-width="0.8"/><rect x="10.5" y="8" width="10" height="12.5" fill="#f4f4f4" stroke="#8a8a8a" stroke-width="0.6"/><rect x="10.8" y="8.3" width="9.4" height="2" fill="#5a7aaa"/><path d="M12.5 11.5 v8 M14.8 11.5 v8 M17 11.5 v8" stroke="#3a3a3a" stroke-width="0.8"/><rect x="18.5" y="17.5" width="1.5" height="1.5" fill="#3a7ad8"/></svg>
<svg class="b" style="left:239px;top:497px" width="20" height="23" viewBox="0 0 20 23"><defs><linearGradient id="fc" x1="0" y1="0" x2="1" y2="0"><stop offset="0" stop-color="#b8eaf4"/><stop offset="0.4" stop-color="#58c4dc"/><stop offset="0.75" stop-color="#3aaecc"/><stop offset="1" stop-color="#2a8aa8"/></linearGradient></defs><path d="M10.5 1.5 Q8.5 12 2.5 19.5 Q10 22 18 19.5 Q12.5 12 10.5 1.5 Z" fill="url(#fc)"/><path d="M10.5 3 Q10 12 11.5 17" stroke="#e8f8fc" stroke-width="0.8" fill="none" opacity="0.7"/><circle cx="8.3" cy="15" r="0.7" fill="#fff"/></svg>
<svg class="b" style="left:238px;top:533px" width="22" height="24" viewBox="0 0 22 24"><defs><radialGradient id="gl" cx="0.4" cy="0.35" r="0.7"><stop offset="0" stop-color="#8aa8e8"/><stop offset="0.7" stop-color="#2a4aa8"/><stop offset="1" stop-color="#101a60"/></radialGradient></defs><circle cx="11" cy="9.5" r="9" fill="url(#gl)"/><path d="M4.5 8 L11 4.5 L17.5 8 Z" fill="#eee" stroke="#888" stroke-width="0.4"/><rect x="5" y="8" width="12" height="7" fill="#d8d8d8" stroke="#8a8a8a" stroke-width="0.4"/><path d="M6.5 8.5 v6 M8.5 8.5 v6 M13.5 8.5 v6 M15.5 8.5 v6" stroke="#7a7a7a" stroke-width="0.7"/><rect x="10" y="10.5" width="2" height="4.5" fill="#333"/><rect x="4" y="15" width="14" height="1.5" fill="#c8c8c8" stroke="#888" stroke-width="0.3"/><path d="M11 18.5 v3 M6 22 h10" stroke="#8a8a8a" stroke-width="1"/></svg>
</body></html>
